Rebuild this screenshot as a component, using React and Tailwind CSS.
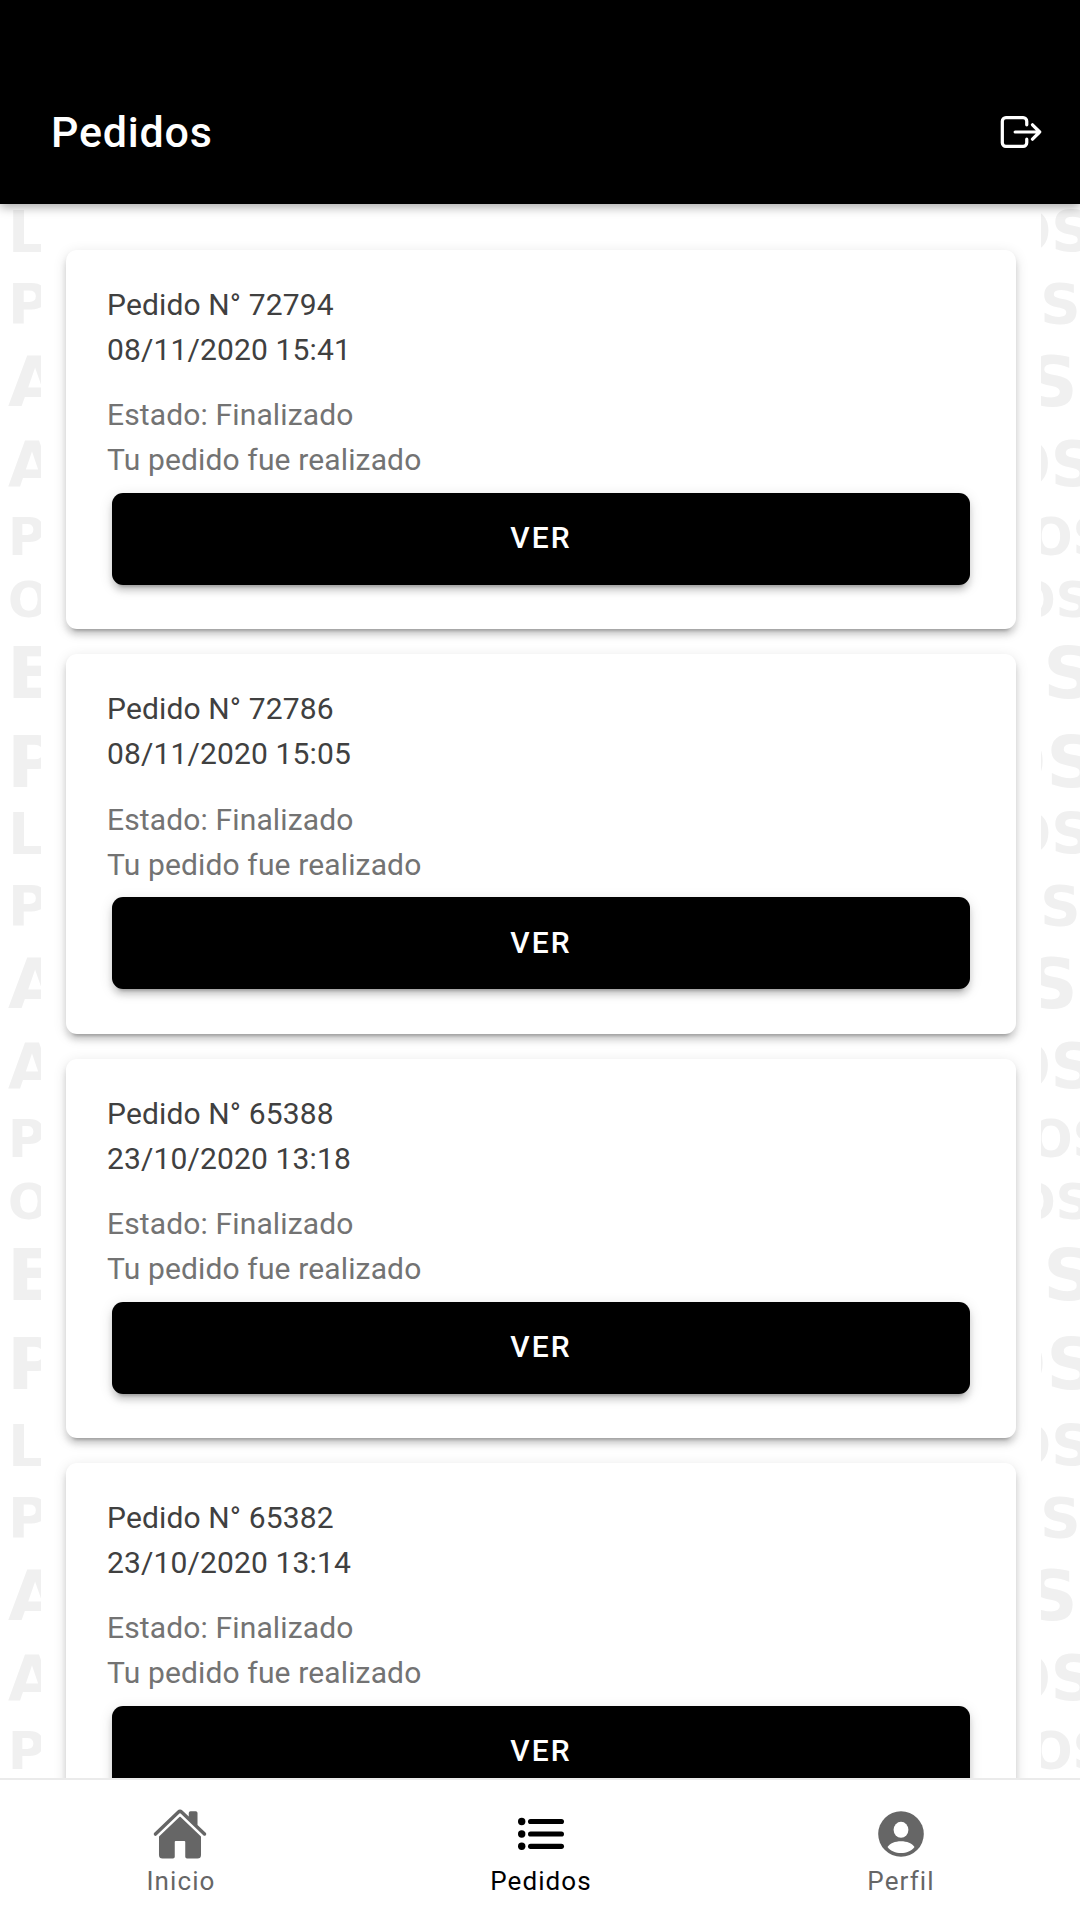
import { IoExitOutline, IoHome } from 'react-icons/io5';

const orders = [
  { id: 72794, date: '08/11/2020 15:41' },
  { id: 72786, date: '08/11/2020 15:05' },
  { id: 65388, date: '23/10/2020 13:18' },
  { id: 65382, date: '23/10/2020 13:14' },
];

// top of each repetition of the background lettering
const offsets = [0, 602, 1214];
const rows = [
  { first: 'L', last: 'OS', base: 48, size: 57, left: 8, s: 14 },
  { first: 'P', last: 'OS', base: 119, size: 56, left: 8, s: 3 },
  { first: 'A', last: 'OS', base: 202, size: 70, left: 8, s: -9 },
  { first: 'A', last: 'OS', base: 282, size: 62, left: 8, s: 14 },
  { first: 'P', last: 'OS', base: 351, size: 51, left: 8, s: 35 },
  { first: 'O', last: 'OS', base: 413, size: 49, left: 8, s: 18 },
  { first: 'E', last: 'OS', base: 494, size: 72, left: 7, s: 7 },
  { first: 'P', last: 'OS', base: 583, size: 72, left: 7, s: 10 },
];

function Lettering({ side }) {
  return (
    <svg width={side === 'left' ? 41 : 39} height="1574" fill="#f0f0f0" fontWeight="700" letterSpacing="0" aria-hidden="true">
      {offsets.map((offset) =>
        rows.map((row) => (
          <text
            key={`${offset}-${row.base}`}
            x={side === 'left' ? row.left : row.s - row.size * 0.917}
            y={row.base + offset}
            fontSize={row.size}
            fontFamily="DejaVu Sans, sans-serif"
          >
            {side === 'left' ? row.first : row.last}
          </text>
        ))
      )}
    </svg>
  );
}

function OrderCard({ order }) {
  return (
    <article className="h-[379.3px] shrink-0 rounded-[11px] bg-white px-[41px] pt-[32px] text-[30px] leading-[45px] shadow-[0_8px_3px_-6px_rgba(0,0,0,0.2),0_6px_6px_0_rgba(0,0,0,0.14),0_3px_14px_0_rgba(0,0,0,0.12)]">
      <h2 className="text-[#404040]">
        Pedido N° {order.id}
        <br />
        {order.date}
      </h2>
      <p className="mt-[20.4px] text-[#737373]">
        Estado: Finalizado
        <br />
        Tu pedido fue realizado
      </p>
      <button className="mx-[5px] mt-[10.6px] block h-[92px] w-[858px] rounded-[11px] bg-black pb-[2px] text-[30px] font-medium tracking-[2.1px] text-white shadow-[0_8px_3px_-6px_rgba(0,0,0,0.2),0_6px_6px_0_rgba(0,0,0,0.14),0_3px_14px_0_rgba(0,0,0,0.12)]">
        VER
      </button>
    </article>
  );
}

function ListIcon() {
  return (
    <svg width="48" height="34" viewBox="0 0 48 34" fill="currentColor">
      {[4.5, 17, 29.3].map((y) => (
        <g key={y}>
          <circle cx="4.7" cy={y} r="3.7" />
          <rect x="11" y={y - 2.6} width="36" height="5.2" rx="2.6" />
        </g>
      ))}
    </svg>
  );
}

function PersonIcon() {
  return (
    <svg width="46" height="46" viewBox="-23 -23 46 46">
      <circle r="22.8" fill="currentColor" />
      <ellipse cy="-4.2" rx="7.4" ry="8" fill="white" />
      <path d="M-13.5 13C-11 9.3-6 7.2 0 7.2S11 9.3 13.5 13C10.4 17 5.400 19.100 0 19.100S-10.400 17-13.5 13Z" fill="white" />
    </svg>
  );
}

function Tab({ label, active, children }) {
  return (
    <button className={`flex flex-1 flex-col items-center pt-[28px] pl-[2px] ${active ? 'text-black' : 'text-[#666666]'}`}>
      <span className="flex h-[52px] items-center justify-center">{children}</span>
      <span className="mt-[5px] text-[26px] leading-[32px] tracking-[1.1px]">{label}</span>
    </button>
  );
}

export default function App() {
  return (
    <div className="flex h-[1920px] w-[1080px] flex-col overflow-hidden bg-white font-[Roboto,sans-serif] tracking-[0.14px]">
      <header className="relative z-10 flex h-[204px] shrink-0 items-center justify-between bg-black pt-[60px] pr-[36px] pl-[51px] text-white shadow-[0_3px_10px_rgba(0,0,0,0.35)]">
        <h1 className="text-[43px] font-medium tracking-[0.8px]">Pedidos</h1>
        <IoExitOutline size={46} className="[&_path]:[stroke-width:36px]" />
      </header>

      <main className="flex min-h-0 flex-1 overflow-hidden">
        <Lettering side="left" />
        <div className="flex w-[1000px] shrink-0 flex-col gap-[25px] px-[25px] pt-[46px]">
          {orders.map((order) => (
            <OrderCard key={order.id} order={order} />
          ))}
        </div>
        <Lettering side="right" />
      </main>

      <nav className="relative z-10 flex h-[142px] shrink-0 border-t-2 border-[#ebebeb] bg-white">
        <Tab label="Inicio">
          <IoHome size={56} className="mr-[2px]" />
        </Tab>
        <Tab label="Pedidos" active>
          <ListIcon />
        </Tab>
        <Tab label="Perfil">
          <PersonIcon />
        </Tab>
      </nav>
    </div>
  );
}
